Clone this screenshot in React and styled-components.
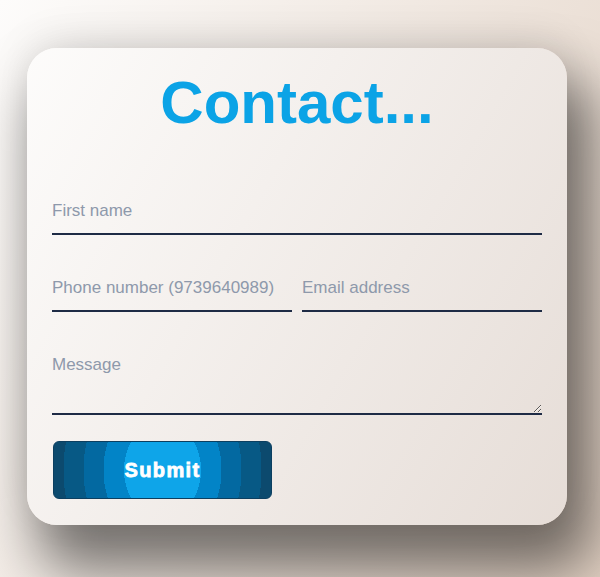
import React from "react";
import styled, { createGlobalStyle } from "styled-components";

const Global = createGlobalStyle`
  html, body { margin: 0; padding: 0; height: 100%; }
  body {
    background: linear-gradient(120deg, #fdfcfb 0%, #e2d1c3 100%);
    font-family: "Liberation Sans", Arial, sans-serif;
  }
  #root { height: 100%; }
`;

const Page = styled.div`
  box-sizing: border-box;
  min-height: 100%;
  padding: 48px 33px 0 27px;
`;

const Card = styled.form`
  box-sizing: border-box;
  width: 540px;
  padding: 20px 25px 26px;
  border-radius: 30px;
  background: linear-gradient(120deg, #fdfcfb 0%, #e6ddd7 100%);
  box-shadow: 0 -10px 40px rgba(0, 0, 0, 0.08), 18px 38px 55px 8px rgba(0, 0, 0, 0.5);
  display: flex;
  flex-direction: column;
`;

const Title = styled.h1`
  margin: 0 0 52px;
  text-align: center;
  font-family: "Liberation Sans", Arial, sans-serif;
  font-weight: 700;
  font-size: 60px;
  color: #0ba3e6;
`;

const Row = styled.div`
  display: flex;
  gap: 10px;
  margin-bottom: 31px;
`;

const Field = styled.input`
  flex: 1;
  min-width: 0;
  box-sizing: border-box;
  padding: 12px 0;
  border: none;
  border-bottom: 2px solid #1e2b45;
  background: transparent;
  font-family: "Liberation Sans", Arial, sans-serif;
  font-size: 17px;
  color: #1e293b;
  outline: none;
  &::placeholder { color: #8e99ab; }
`;

const Area = styled.textarea`
  display: block;
  box-sizing: border-box;
  width: 100%;
  height: 72px;
  padding: 12px 0;
  margin: 0 0 26px;
  border: none;
  border-bottom: 2px solid #1e2b45;
  background: transparent;
  font-family: "Liberation Sans", Arial, sans-serif;
  font-size: 17px;
  color: #1e293b;
  outline: none;
  resize: vertical;
  &::placeholder { color: #8e99ab; }
`;

const Button = styled.button`
  align-self: flex-start;
  box-sizing: border-box;
  width: 219px;
  height: 58px;
  margin-left: 1px;
  border: 1px solid #0c3f60;
  border-radius: 6px;
  background: radial-gradient(
    ellipse 100px 125px at 50% 50%,
    #0ea5e9 0 38.5%,
    #0284c7 38.5% 59%,
    #0369a1 59% 79%,
    #075985 79% 99%,
    #0c4a6e 99%
  );
  color: #fff;
  font-family: "Liberation Sans", Arial, sans-serif;
  font-weight: 700;
  font-size: 20px;
  letter-spacing: 1.4px;
  -webkit-text-stroke: 0.8px #fff;
  cursor: pointer;
`;

export default function App() {
  return (
    <>
      <Global />
      <Page>
        <Card onSubmit={(e) => e.preventDefault()}>
          <Title>Contact...</Title>
          <Row>
            <Field placeholder="First name" />
          </Row>
          <Row>
            <Field placeholder="Phone number (9739640989)" />
            <Field placeholder="Email address" />
          </Row>
          <Area placeholder="Message" />
          <Button type="submit">Submit</Button>
        </Card>
      </Page>
    </>
  );
}
